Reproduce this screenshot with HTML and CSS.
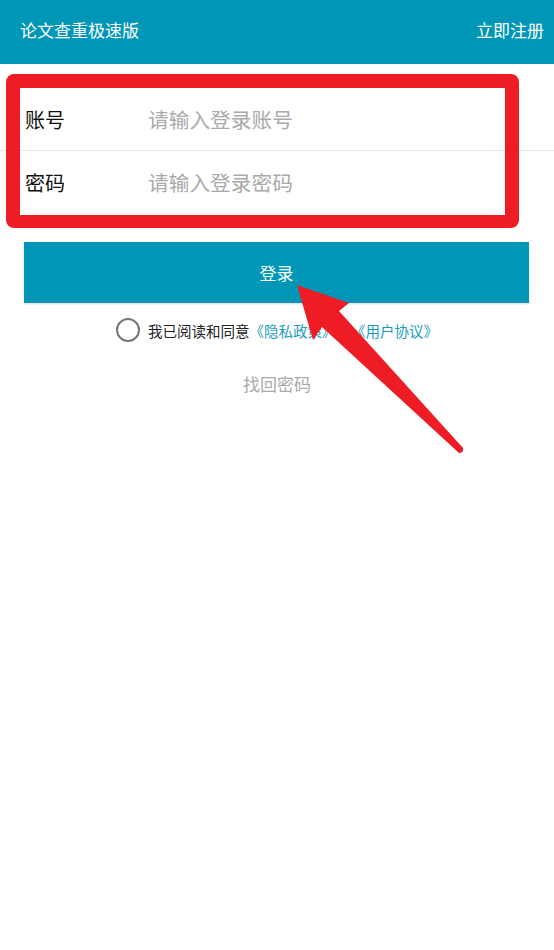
FILE: index.html
```html
<!DOCTYPE html>
<html lang="zh-CN">
<head>
    <meta charset="UTF-8">
    <title>论文查重极速版 - 登录</title>
    <link rel="stylesheet" href="styles.css">
</head>
<body>
<div class="page">
    <div class="topbar">
        <span class="topbar-title">论文查重极速版</span>
        <span class="topbar-link">立即注册</span>
    </div>

    <div class="fields">
        <div class="field">
            <span class="field-label">账号</span>
            <span class="field-input">请输入登录账号</span>
        </div>
        <div class="field field-last">
            <span class="field-label">密码</span>
            <span class="field-input">请输入登录密码</span>
        </div>
    </div>

    <div class="login-btn">登录</div>

    <div class="agree">
        <span class="agree-check"></span>
        <span class="agree-text">我已阅读和同意</span><span class="agree-link">《隐私政策》和《用户协议》</span>
    </div>

    <div class="forget">找回密码</div>

    <!-- 标注：红框和箭头 -->
    <div class="mark-box"></div>
    <svg class="mark-arrow" width="554" height="950" viewBox="0 0 554 950">
        <path d="M297 285 L349 303 L339 311 L463 448 Q464 453 459 453 L322 327 L313 340 Z" fill="#ee1d25"/>
    </svg>
</div>
</body>
</html>
```

FILE: styles.css
```css
body {
    margin: 0;
    font-family: "Noto Sans CJK SC", "Noto Sans", sans-serif;
    background-color: #fff;
}
.page {
    position: relative;
    width: 554px;
    height: 950px;
    overflow: hidden;
}
/*顶部栏*/
.topbar {
    display: flex;
    justify-content: space-between;
    align-items: center;
    height: 64px;
    padding: 0 10px 5px 20px;
    box-sizing: border-box;
    background-color: #0096b7;
    color: #fff;
    font-size: 17px;
}
/*输入区域*/
.fields {
    margin-top: 24px;
}
.field {
    display: flex;
    align-items: center;
    height: 62px;
    padding-left: 25px;
    border-bottom: 1px solid #e6e6e6;
    font-size: 20px;
}
.field-last {
    border-bottom: none;
}
.field-label {
    width: 123px;
    color: #111;
}
.field-input {
    color: #aaa;
    font-size: 20.7px;
}
/*登录按钮*/
.login-btn {
    height: 61px;
    margin: 29px 25px 0 24px;
    line-height: 61px;
    text-align: center;
    background-color: #0096b7;
    color: #fff;
    font-size: 17px;
    box-shadow: 0 1px 2px rgba(0, 0, 0, 0.15);
}
/*协议*/
.agree {
    display: flex;
    justify-content: center;
    align-items: center;
    height: 24px;
    margin-top: 15px;
    font-size: 14.5px;
}
.agree-check {
    width: 20px;
    height: 20px;
    margin-right: 8px;
    border: 2px solid #777;
    border-radius: 50%;
}
.agree-text {
    color: #222;
}
.agree-link {
    color: #1a9bc1;
}
.forget {
    margin-top: 30px;
    text-align: center;
    color: #aaa;
    font-size: 17px;
    line-height: 24px;
}
/*标注*/
.mark-box {
    position: absolute;
    left: 6px;
    top: 74px;
    width: 485px;
    height: 127px;
    border: 14px solid #ee1d25;
    border-bottom-width: 13px;
    border-radius: 8px;
}
.mark-arrow {
    position: absolute;
    left: 0;
    top: 0;
    pointer-events: none;
}
```
